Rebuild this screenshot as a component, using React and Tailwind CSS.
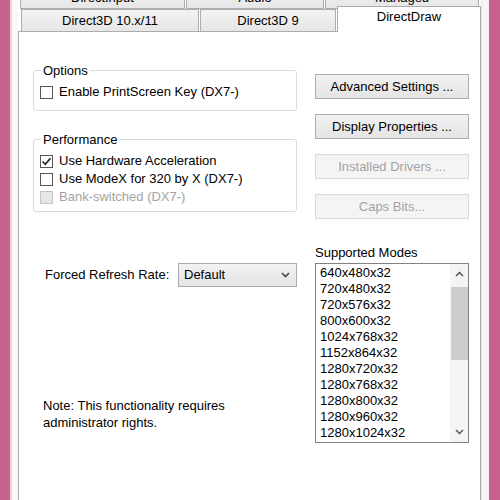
import React from 'react';

const modes = [
  '640x480x32',
  '720x480x32',
  '720x576x32',
  '800x600x32',
  '1024x768x32',
  '1152x864x32',
  '1280x720x32',
  '1280x768x32',
  '1280x800x32',
  '1280x960x32',
  '1280x1024x32',
];

function CheckBox({ label, checked, disabled, row }) {
  return (
    <div className={`flex items-center gap-[6px] ${row}`}>
      <span
        className={`w-[13px] h-[13px] border flex items-center justify-center ${
          disabled ? 'border-[#c4c4c4] bg-[#e6e6e6]' : 'border-[#555] bg-white'
        }`}
      >
        {checked && (
          <svg width="11" height="11" viewBox="0 0 11 11">
            <path d="M1.5 5.5 L4.3 8.3 L9.5 2.2" stroke="#222" strokeWidth="1.7" fill="none" />
          </svg>
        )}
      </span>
      <span className={disabled ? 'text-[#a3a3a3]' : ''}>{label}</span>
    </div>
  );
}

function Button({ children, disabled }) {
  return (
    <button
      type="button"
      className={`h-[25px] w-full border flex items-center justify-center ${
        disabled
          ? 'border-[#d9d9d9] bg-[#f4f4f4] text-[#a3a3a3]'
          : 'border-[#acacac] bg-linear-to-b from-[#f2f2f2] to-[#e4e4e4] text-black'
      }`}
    >
      {children}
    </button>
  );
}

function Tab({ children, w, h = 'h-[22px]', bottom }) {
  return (
    <div
      className={`${w} ${h} shrink-0 border-t border-l border-r ${
        bottom ? 'border-b' : ''
      } border-[#acacac] bg-linear-to-b from-[#f3f3f3] to-[#e6e6e6] flex items-center justify-center`}
    >
      {children}
    </div>
  );
}

export default function App() {
  return (
    <div className="h-screen w-full flex bg-white overflow-hidden font-['Liberation_Sans',Arial,sans-serif] text-[13px] text-black">
      <div className="w-[10px] bg-[#c7628f]" />
      <div className="w-[8px] bg-[#fbf8fa] border-l-2 border-[#ecd2de]" />

      <div className="w-[463px] flex flex-col">
        {/* back row of tabs, mostly cut off */}
        <div className="h-[9px] overflow-hidden flex items-end gap-[1px] pl-[2px]">
          <Tab w="w-[165px]" bottom>DirectInput</Tab>
          <Tab w="w-[138px]" bottom>Audio</Tab>
          <Tab w="w-[154px]" bottom>Managed</Tab>
        </div>
        {/* front row of tabs */}
        <div className="h-[22px] flex items-end gap-[1px] pl-[3px]">
          <Tab w="w-[178px]">Direct3D 10.x/11</Tab>
          <Tab w="w-[136px]">Direct3D 9</Tab>
          <div className="relative z-10 -mb-px w-[144px] h-[26px] shrink-0 border-t border-l border-r border-[#acacac] bg-white flex items-center justify-center pb-[5px]">
            DirectDraw
          </div>
        </div>

        <div className="flex-1 border-t border-l border-r border-[#acacac] bg-white flex pl-[14px]">
          <div className="w-[264px] flex flex-col">
            <div className="mt-[38px] h-[41px] border border-[#dadada] rounded-[3px] flex flex-col">
              <span className="-mt-[8px] ml-[7px] px-[2px] bg-white w-fit leading-[15px]">Options</span>
              <div className="mt-[6px] pl-[6px]">
                <CheckBox label="Enable PrintScreen Key (DX7-)" row="h-[16px]" />
              </div>
            </div>

            <div className="mt-[28px] h-[73px] border border-[#dadada] rounded-[3px] flex flex-col">
              <span className="-mt-[8px] ml-[7px] px-[2px] bg-white w-fit leading-[15px]">Performance</span>
              <div className="mt-[5px] pl-[6px] flex flex-col">
                <CheckBox label="Use Hardware Acceleration" checked row="h-[18px]" />
                <CheckBox label="Use ModeX for 320 by X (DX7-)" row="h-[18px]" />
                <CheckBox label="Bank-switched (DX7-)" disabled row="h-[18px]" />
              </div>
            </div>

            <div className="mt-[51px] h-[24px] flex items-center pl-[12px]">
              <span>Forced Refresh Rate:</span>
              <div className="ml-auto w-[119px] h-[24px] border border-[#acacac] bg-linear-to-b from-[#f2f2f2] to-[#e4e4e4] flex items-center justify-between pl-[5px] pr-[6px]">
                <span>Default</span>
                <svg width="9" height="6" viewBox="0 0 9 6">
                  <path d="M1 1 L4.5 4.5 L8 1" stroke="#444" strokeWidth="1.6" fill="none" />
                </svg>
              </div>
            </div>

            <p className="mt-[110px] pl-[10px] leading-[17px]">
              Note: This functionality requires
              <br />
              administrator rights.
            </p>
          </div>

          <div className="ml-[18px] w-[154px] flex flex-col">
            <div className="mt-[42px] flex flex-col gap-[15px]">
              <Button>Advanced Settings ...</Button>
              <Button>Display Properties ...</Button>
              <Button disabled>Installed Drivers ...</Button>
              <Button disabled>Caps Bits...</Button>
            </div>

            <span className="mt-[26px] leading-[16px]">Supported Modes</span>
            <div className="mt-[2px] h-[180px] border border-[#828282] flex">
              <ul className="flex-1 pt-[1px] pl-[4px]">
                {modes.map((m) => (
                  <li key={m} className="leading-[16px]">
                    {m}
                  </li>
                ))}
              </ul>
              <div className="w-[18px] bg-[#f4f4f4] flex flex-col items-center">
                <div className="h-[20px] flex items-center justify-center">
                  <svg width="9" height="6" viewBox="0 0 9 6">
                    <path d="M1 5 L4.5 1.5 L8 5" stroke="#555" strokeWidth="1.5" fill="none" />
                  </svg>
                </div>
                <div className="mt-[3px] h-[73px] w-[17px] bg-[#cdcdcd]" />
                <div className="flex-1" />
                <div className="h-[20px] flex items-center justify-center">
                  <svg width="9" height="6" viewBox="0 0 9 6">
                    <path d="M1 1 L4.5 4.5 L8 1" stroke="#555" strokeWidth="1.5" fill="none" />
                  </svg>
                </div>
              </div>
            </div>
          </div>
        </div>
      </div>

      <div className="w-[8px] bg-[#f8f3f6] border-l border-[#e4e4e4]" />
      <div className="flex-1 bg-[#c7628f]" />
    </div>
  );
}
